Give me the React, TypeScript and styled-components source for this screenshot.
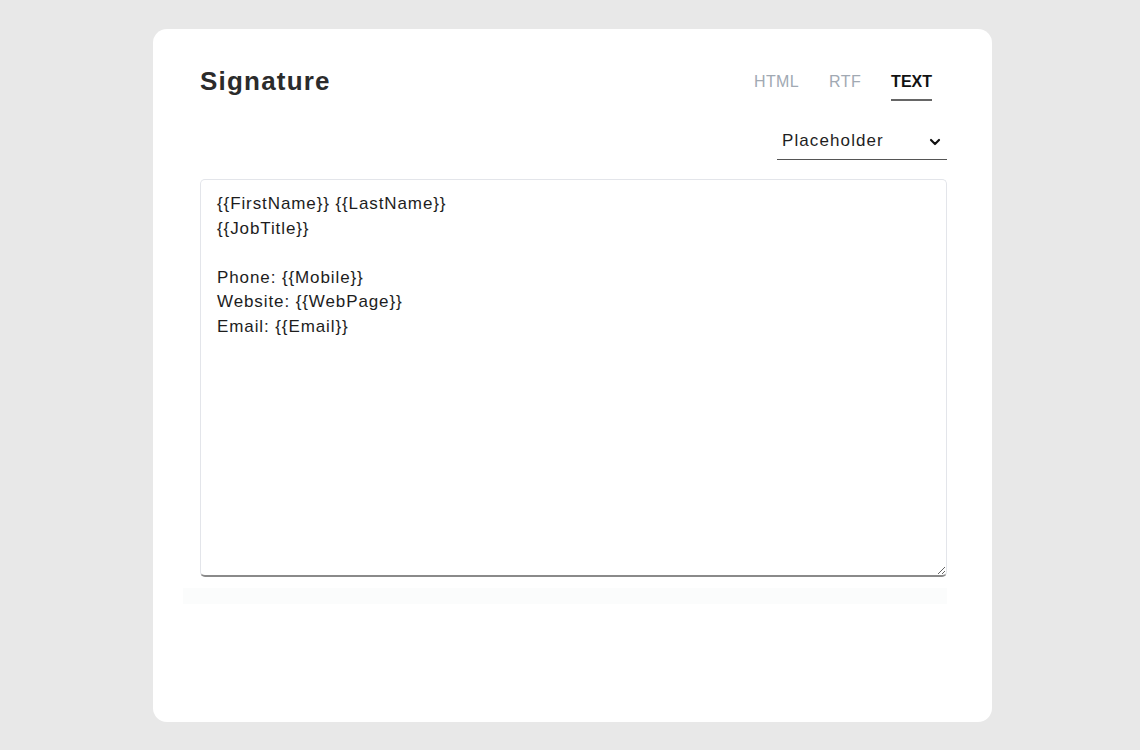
import React, { useState } from 'react';
import styled, { createGlobalStyle } from 'styled-components';
import { ChevronDown } from 'lucide-react';

const GlobalStyle = createGlobalStyle`
  html, body {
    margin: 0;
    padding: 0;
    background: #e8e8e8;
    font-family: "Liberation Sans", Arial, sans-serif;
  }
`;

const Page = styled.div`
  min-height: 750px;
  padding: 29px 148px 28px 153px;
  box-sizing: border-box;
`;

const Card = styled.div`
  background: #ffffff;
  border-radius: 14px;
  height: 693px;
  padding: 38px 45px 0 47px;
  box-sizing: border-box;
`;

const Header = styled.div`
  display: flex;
  justify-content: space-between;
  align-items: flex-start;
`;

const Title = styled.h1`
  margin: 0;
  font-size: 26px;
  line-height: 29px;
  font-weight: 700;
  letter-spacing: 1.2px;
  color: #2b2b2b;
`;

const Tabs = styled.div`
  display: flex;
  gap: 30px;
  margin: 6px 15px 0 0;
`;

const Tab = styled.button<{ $active?: boolean }>`
  background: none;
  border: none;
  padding: 0 0 8px;
  font-family: inherit;
  font-size: 16px;
  line-height: 18px;
  letter-spacing: ${(p) => (p.$active ? '0' : '0.4px')};
  font-weight: ${(p) => (p.$active ? 700 : 400)};
  color: ${(p) => (p.$active ? '#111111' : '#a1a9b3')};
  border-bottom: 2px solid ${(p) => (p.$active ? '#666666' : 'transparent')};
  cursor: pointer;
`;

const ToolRow = styled.div`
  display: flex;
  justify-content: flex-end;
  margin-top: 21px;
`;

const SelectWrap = styled.div`
  position: relative;
  width: 170px;
`;

const Select = styled.select`
  appearance: none;
  width: 100%;
  height: 38px;
  border: none;
  border-bottom: 1px solid #555555;
  background: transparent;
  padding: 0 30px 0 5px;
  font-family: inherit;
  font-size: 17px;
  letter-spacing: 1.1px;
  color: #1e1e1e;
  outline: none;
`;

const Chevron = styled(ChevronDown)`
  position: absolute;
  right: 4px;
  top: 12px;
  pointer-events: none;
  color: #111111;
`;

const Editor = styled.textarea`
  display: block;
  width: 100%;
  height: 398px;
  margin-top: 19px;
  box-sizing: border-box;
  border: 1px solid #e3e5ea;
  border-bottom: 2px solid #8a8a8a;
  border-radius: 5px;
  padding: 12px 16px;
  font-family: inherit;
  font-size: 17px;
  line-height: 24.6px;
  letter-spacing: 0.9px;
  color: #1d1d1d;
  resize: vertical;
  outline: none;
`;

const Hint = styled.div`
  height: 16px;
  margin: 11px 0 0 -17px;
  background: #fbfcfc;
`;

const initial = `{{FirstName}} {{LastName}}
{{JobTitle}}

Phone: {{Mobile}}
Website: {{WebPage}}
Email: {{Email}}`;

export default function App() {
  const [tab, setTab] = useState('TEXT');
  const [value, setValue] = useState(initial);

  return (
    <Page>
      <GlobalStyle />
      <Card>
        <Header>
          <Title>Signature</Title>
          <Tabs>
            {['HTML', 'RTF', 'TEXT'].map((t) => (
              <Tab key={t} $active={tab === t} onClick={() => setTab(t)}>
                {t}
              </Tab>
            ))}
          </Tabs>
        </Header>
        <ToolRow>
          <SelectWrap>
            <Select defaultValue="">
              <option value="">Placeholder</option>
              <option value="FirstName">FirstName</option>
              <option value="LastName">LastName</option>
              <option value="JobTitle">JobTitle</option>
              <option value="Mobile">Mobile</option>
              <option value="WebPage">WebPage</option>
              <option value="Email">Email</option>
            </Select>
            <Chevron size={16} strokeWidth={3.2} />
          </SelectWrap>
        </ToolRow>
        <Editor value={value} onChange={(e) => setValue(e.target.value)} spellCheck={false} />
        <Hint />
      </Card>
    </Page>
  );
}
